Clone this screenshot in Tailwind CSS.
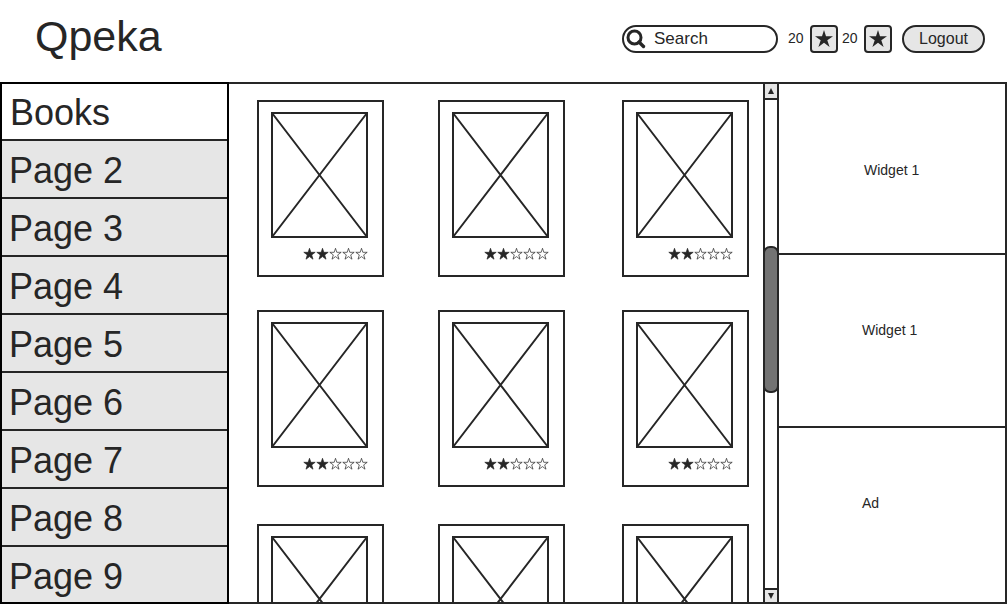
<!DOCTYPE html>
<html lang="en">
<head>
<meta charset="utf-8">
<meta name="viewport" content="width=device-width, initial-scale=1">
<title>Qpeka</title>
<script src="https://cdn.jsdelivr.net/npm/@tailwindcss/browser@4"></script>
</head>
<body class="flex h-screen flex-col overflow-hidden bg-white font-['Liberation_Sans',Arial,sans-serif] text-sm text-[#262626]">

<svg class="hidden" aria-hidden="true">
  <symbol id="star" viewBox="0 0 20 20"><path d="M10 1 12 7.300H19L13.300 11.300 15.600 18 10 13.800 4.400 18 6.700 11.300 1 7.300H8Z"/></symbol>
  <symbol id="cover" viewBox="0 0 97 126"><path d="M1 1H96V125H1ZM1 1 96 125M96 1 1 125" fill="none" stroke="#262626" stroke-width="2"/></symbol>
  <symbol id="rating" viewBox="0 0 65 14">
    <g stroke="#262626" stroke-width="0.700">
      <path fill="#262626" d="M6.500 1.300 7.800 5.300H12.200L8.700 7.900 10 12.200 6.500 9.600 3 12.200 4.300 7.900 0.800 5.300H5.200Z"/>
      <path fill="#262626" d="M19.500 1.300 20.800 5.300H25.200L21.700 7.900 23 12.200 19.500 9.600 16 12.200 17.300 7.900 13.800 5.300H18.200Z"/>
      <path fill="none" d="M32.500 1.300 33.800 5.300H38.200L34.700 7.900 36 12.200 32.500 9.600 29 12.200 30.300 7.900 26.800 5.300H31.200Z"/>
      <path fill="none" d="M45.500 1.300 46.800 5.300H51.200L47.700 7.900 49 12.200 45.500 9.600 42 12.200 43.300 7.900 39.800 5.300H44.200Z"/>
      <path fill="none" d="M58.500 1.300 59.800 5.300H64.200L60.700 7.900 62 12.200 58.500 9.600 55 12.200 56.300 7.900 52.800 5.300H57.200Z"/>
    </g>
  </symbol>
</svg>

<header class="flex h-[82px] shrink-0 items-center pr-[22px] pl-[35px]">
  <h1 class="mb-2.5 text-[43px] leading-none">Qpeka</h1>
  <div class="mb-1 ml-auto flex items-center">
    <label class="flex h-7 w-39 items-center gap-2 rounded-full border-2 border-[#262626] pl-0.5">
      <svg class="size-5 shrink-0" viewBox="0 0 20 20" fill="none" stroke="#262626" aria-hidden="true"><circle cx="8.500" cy="8.500" r="6.500" stroke-width="3"/><path d="M13 13 17.500 17.500" stroke-width="3.400" stroke-linecap="round"/></svg>
      <input type="text" aria-label="Search" placeholder="Search" class="w-full min-w-0 bg-transparent text-[17px] outline-none placeholder:text-[#262626]">
    </label>
    <span class="mb-0.5 ml-2.5 w-[22px]">20</span>
    <button type="button" aria-label="Favourites" class="flex size-7 items-center justify-center rounded-sm border-2 border-[#262626] bg-[#e6e6e6]"><svg class="size-5 fill-[#262626]"><use href="#star"/></svg></button>
    <span class="mb-0.5 ml-1 w-[22px]">20</span>
    <button type="button" aria-label="Starred" class="flex size-7 items-center justify-center rounded-sm border-2 border-[#262626] bg-[#e6e6e6]"><svg class="size-5 fill-[#262626]"><use href="#star"/></svg></button>
    <button type="button" class="ml-2.5 h-7 w-[83px] rounded-full border-2 border-[#262626] bg-[#e6e6e6] text-base leading-none">Logout</button>
  </div>
</header>

<div class="flex min-h-0 flex-1">
  <nav class="w-[229px] shrink-0 overflow-hidden border-2 border-black bg-[#e6e6e6] text-[36px] leading-[52px]" aria-label="Pages">
    <a href="#" class="-mt-px block border-b-2 border-[#262626] bg-white pt-1 pl-2" aria-current="page">Books</a>
    <a href="#" class="block border-b-2 border-[#262626] pt-1 pl-[7px]">Page 2</a>
    <a href="#" class="block border-b-2 border-[#262626] pt-1 pl-[7px]">Page 3</a>
    <a href="#" class="block border-b-2 border-[#262626] pt-1 pl-[7px]">Page 4</a>
    <a href="#" class="block border-b-2 border-[#262626] pt-1 pl-[7px]">Page 5</a>
    <a href="#" class="block border-b-2 border-[#262626] pt-1 pl-[7px]">Page 6</a>
    <a href="#" class="block border-b-2 border-[#262626] pt-1 pl-[7px]">Page 7</a>
    <a href="#" class="block border-b-2 border-[#262626] pt-1 pl-[7px]">Page 8</a>
    <a href="#" class="block pt-1 pl-[7px]">Page 9</a>
  </nav>

  <div class="flex min-w-0 flex-1 border-y-2 border-r-2 border-[#262626]">
    <main class="grid min-w-0 flex-1 grid-cols-[181fr_184fr_127fr] grid-rows-[210px_214px_177px] content-start items-start overflow-hidden pt-4 pr-3.5 pl-7">
      <article class="flex w-[127px] flex-col border-2 border-[#262626] pt-2.5 pr-3.5 pb-3.5 pl-3"><svg class="h-[126px] w-[97px]" role="img" aria-label="Book cover"><use href="#cover"/></svg><svg class="mt-[9px] h-3.5 w-[65px] self-end" role="img" aria-label="2 of 5 stars"><use href="#rating"/></svg></article>
      <article class="flex w-[127px] flex-col border-2 border-[#262626] pt-2.5 pr-3.5 pb-3.5 pl-3"><svg class="h-[126px] w-[97px]" role="img" aria-label="Book cover"><use href="#cover"/></svg><svg class="mt-[9px] h-3.5 w-[65px] self-end" role="img" aria-label="2 of 5 stars"><use href="#rating"/></svg></article>
      <article class="flex w-[127px] flex-col border-2 border-[#262626] pt-2.5 pr-3.5 pb-3.5 pl-3"><svg class="h-[126px] w-[97px]" role="img" aria-label="Book cover"><use href="#cover"/></svg><svg class="mt-[9px] h-3.5 w-[65px] self-end" role="img" aria-label="2 of 5 stars"><use href="#rating"/></svg></article>
      <article class="flex w-[127px] flex-col border-2 border-[#262626] pt-2.5 pr-3.5 pb-3.5 pl-3"><svg class="h-[126px] w-[97px]" role="img" aria-label="Book cover"><use href="#cover"/></svg><svg class="mt-[9px] h-3.5 w-[65px] self-end" role="img" aria-label="2 of 5 stars"><use href="#rating"/></svg></article>
      <article class="flex w-[127px] flex-col border-2 border-[#262626] pt-2.5 pr-3.5 pb-3.5 pl-3"><svg class="h-[126px] w-[97px]" role="img" aria-label="Book cover"><use href="#cover"/></svg><svg class="mt-[9px] h-3.5 w-[65px] self-end" role="img" aria-label="2 of 5 stars"><use href="#rating"/></svg></article>
      <article class="flex w-[127px] flex-col border-2 border-[#262626] pt-2.5 pr-3.5 pb-3.5 pl-3"><svg class="h-[126px] w-[97px]" role="img" aria-label="Book cover"><use href="#cover"/></svg><svg class="mt-[9px] h-3.5 w-[65px] self-end" role="img" aria-label="2 of 5 stars"><use href="#rating"/></svg></article>
      <article class="flex w-[127px] flex-col border-2 border-[#262626] pt-2.5 pr-3.5 pb-3.5 pl-3"><svg class="h-[126px] w-[97px]" role="img" aria-label="Book cover"><use href="#cover"/></svg><svg class="mt-[9px] h-3.5 w-[65px] self-end" role="img" aria-label="2 of 5 stars"><use href="#rating"/></svg></article>
      <article class="flex w-[127px] flex-col border-2 border-[#262626] pt-2.5 pr-3.5 pb-3.5 pl-3"><svg class="h-[126px] w-[97px]" role="img" aria-label="Book cover"><use href="#cover"/></svg><svg class="mt-[9px] h-3.5 w-[65px] self-end" role="img" aria-label="2 of 5 stars"><use href="#rating"/></svg></article>
      <article class="flex w-[127px] flex-col border-2 border-[#262626] pt-2.5 pr-3.5 pb-3.5 pl-3"><svg class="h-[126px] w-[97px]" role="img" aria-label="Book cover"><use href="#cover"/></svg><svg class="mt-[9px] h-3.5 w-[65px] self-end" role="img" aria-label="2 of 5 stars"><use href="#rating"/></svg></article>
    </main>

    <div class="flex w-4 shrink-0 flex-col border-x-2 border-[#262626]">
      <button type="button" aria-label="Scroll up" class="flex h-4 items-center justify-center border-b-2 border-[#262626] bg-[#e6e6e6]"><svg class="size-1.5 fill-[#262626]" viewBox="0 0 6 6"><path d="M3 0 6 6H0Z"/></svg></button>
      <div class="flex flex-1 flex-col">
        <div class="flex-[146]"></div>
        <div class="-mx-0.5 h-[147px] rounded-[7px] border-2 border-[#262626] bg-[#737373]"></div>
        <div class="flex-[195]"></div>
      </div>
      <button type="button" aria-label="Scroll down" class="flex h-3.5 items-center justify-center border-t-2 border-[#262626] bg-[#e6e6e6]"><svg class="size-1.5 fill-[#262626]" viewBox="0 0 6 6"><path d="M0 0H6L3 6Z"/></svg></button>
    </div>

    <aside class="flex w-[226px] shrink-0 flex-col leading-5">
      <section class="h-[171px] border-b-2 border-[#262626] pt-[76px] pl-[85px]">Widget 1</section>
      <section class="h-[173px] border-b-2 border-[#262626] pt-[65px] pl-[83px]">Widget 1</section>
      <section class="flex-1 pt-[65px] pl-[83px]">Ad</section>
    </aside>
  </div>
</div>
</body>
</html>
